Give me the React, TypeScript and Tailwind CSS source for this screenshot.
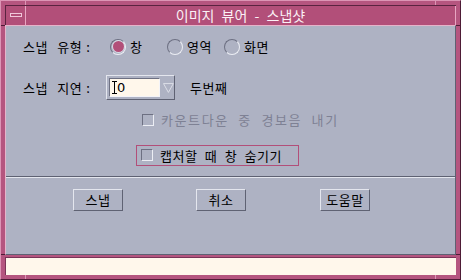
import React from 'react';

const FONT = { fontFamily: '"Noto Sans CJK KR", "Noto Sans", sans-serif' };

function Radio({ checked, label }: { checked?: boolean; label: string }) {
    return (
        <div className="flex items-center w-[57px]">
            <div className="w-4 h-4 rounded-full border border-t-[#6d7082] border-l-[#6d7082] border-b-[#eceef4] border-r-[#eceef4] flex items-center justify-center">
                {checked && <div className="w-[11px] h-[11px] rounded-full bg-[#b24f79] ring-1 ring-[#d9dbe6]" />}
            </div>
            <span className="ml-[4px] text-[13px] leading-none text-black tracking-[0.5px]">{label}</span>
        </div>
    );
}

function Check() {
    return <div className="w-[12px] h-[12px] border border-t-[#6d7082] border-l-[#6d7082] border-b-[#eceef4] border-r-[#eceef4] bg-[#aeb2c3]" />;
}

function Btn({ label }: { label: string }) {
    return (
        <button className="w-[50px] h-[22px] border border-t-[#e4e6ee] border-l-[#e4e6ee] border-b-[#5f6273] border-r-[#5f6273] bg-[#aeb2c3] text-[13px] leading-none text-black flex items-center justify-center tracking-[0.5px]">
            {label}
        </button>
    );
}

function Label({ text }: { text: string }) {
    return (
        <span className="w-[83px] text-[13px] leading-none text-black tracking-[0.5px] [word-spacing:6px]">
            {text}<span className="ml-[4px]">:</span>
        </span>
    );
}

export default function App() {
    return (
        <div className="w-[461px] h-[280px] relative bg-[#b5557f] border border-t-[#dc95b5] border-l-[#dc95b5] border-b-[#4e1c36] border-r-[#4e1c36] p-[4px] flex flex-col [word-spacing:4px]" style={FONT}>
            {/* frame resize ticks */}
            <div className="absolute left-[24px] top-0 w-px h-[4px] bg-[#dc95b5]" />
            <div className="absolute right-[24px] top-0 w-px h-[4px] bg-[#dc95b5]" />
            <div className="absolute left-[24px] bottom-0 w-px h-[4px] bg-[#dc95b5]" />
            <div className="absolute right-[24px] bottom-0 w-px h-[4px] bg-[#dc95b5]" />
            <div className="absolute left-0 top-[24px] h-px w-[4px] bg-[#4e1c36]" />
            <div className="absolute right-0 top-[24px] h-px w-[4px] bg-[#4e1c36]" />
            <div className="absolute left-0 bottom-[24px] h-px w-[4px] bg-[#4e1c36]" />
            <div className="absolute right-0 bottom-[24px] h-px w-[4px] bg-[#4e1c36]" />

            {/* title bar */}
            <div className="h-[20px] flex border-t border-l border-[#5a2340] bg-[#b24f79]">
                <div className="w-[20px] flex items-center justify-center border-r border-[#e8a6c2]">
                    <div className="w-[12px] h-[4px] border border-[#f0c8da] bg-[#b24f79]" />
                </div>
                <div className="flex-1 flex items-center justify-center text-[14px] leading-none text-[#fbf1f6] border-r border-[#e8a6c2]">
                    이미지 뷰어 - 스냅샷
                </div>
            </div>

            {/* body */}
            <div className="h-[231px] bg-[#aeb2c3] border-t border-l border-[#e6b3c9] border-b border-r border-b-[#5e6172] border-r-[#5e6172] flex flex-col">
                <div className="h-[150px] flex flex-col pl-[17px]">
                    <div className="mt-[11px] h-[20px] flex items-center">
                        <Label text="스냅 유형" />
                        <div className="ml-[4px] flex">
                            <Radio checked label="창" />
                            <Radio label="영역" />
                            <Radio label="화면" />
                        </div>
                    </div>

                    <div className="mt-[18px] h-[25px] flex items-center">
                        <Label text="스냅 지연" />
                        <div className="w-[69px] h-[25px] flex items-center border border-t-[#e4e6ee] border-l-[#e4e6ee] border-b-[#5f6273] border-r-[#5f6273] pl-[2px]">
                            <div className="w-[52px] h-[19px] bg-[#fff7eb] border border-t-[#6d7082] border-l-[#6d7082] border-b-[#f4f4f8] border-r-[#f4f4f8] flex items-center pl-[2px]">
                                <svg width="5" height="13" viewBox="0 0 5 13" className="shrink-0">
                                    <path d="M0 0.5H5M0 12.5H5M2.5 0V13" stroke="#000" strokeWidth="1" fill="none" />
                                </svg>
                                <span className="text-[13px] leading-none text-black" style={{ fontFamily: '"DejaVu Sans", sans-serif' }}>0</span>
                            </div>
                            <svg width="11" height="11" viewBox="0 0 11 11" className="ml-[3px]">
                                <path d="M0.5 1.5H10.5L5.5 10.5Z" stroke="#dcdee8" strokeWidth="1" fill="none" />
                            </svg>
                        </div>
                        <span className="ml-[15px] text-[13px] leading-none text-black tracking-[0.5px]">두번째</span>
                    </div>

                    <div className="mt-[10px] h-[20px] ml-[113px] flex items-center pl-[5px] border border-transparent">
                        <Check />
                        <span className="ml-[7px] text-[13px] leading-none text-[#7e8194] tracking-[1.6px] [word-spacing:5px]">카운트다운 중 경보음 내기</span>
                    </div>

                    <div className="mt-[15px] h-[21px] ml-[113px] w-[163px] flex items-center pl-[4px] border border-[#b24f79]">
                        <Check />
                        <span className="ml-[7px] text-[13px] leading-none text-black tracking-[0.5px] [word-spacing:4px]">캡처할 때 창 숨기기</span>
                    </div>
                </div>

                <div className="h-px bg-[#5e6172]" />
                <div className="h-px bg-[#e4e6ee]" />

                <div className="flex pl-[67px] mt-[11px]">
                    <Btn label="스냅" />
                    <div className="ml-[73px]"><Btn label="취소" /></div>
                    <div className="ml-[74px]"><Btn label="도움말" /></div>
                </div>
            </div>

            {/* status strip */}
            <div className="mt-[2px] h-[18px] bg-[#fff7eb] border-t border-l border-[#7a3457]" />
        </div>
    );
}
